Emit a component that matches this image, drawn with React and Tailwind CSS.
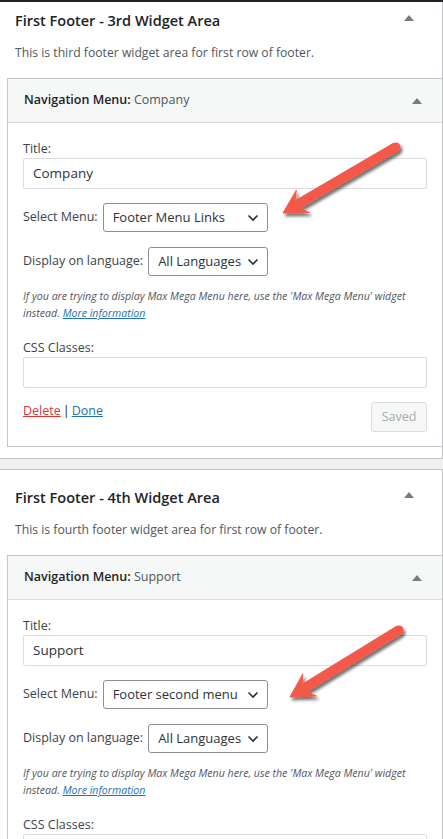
import React from "react";

const font = { fontFamily: '"Open Sans", "Noto Sans", sans-serif' };

const Caret = ({ className = "" }) => (
  <svg width="10" height="6" viewBox="0 0 10 6" className={className}>
    <path d="M5 0 L10 6 L0 6 Z" fill="#787c82" />
  </svg>
);

const Chevron = () => (
  <svg width="12" height="8" viewBox="0 0 12 8" className="shrink-0">
    <path d="M1.5 1.5 L6 6 L10.5 1.5" fill="none" stroke="#2c3338" strokeWidth="1.6" />
  </svg>
);

const Select = ({ value, width }) => (
  <div
    className={`flex h-[29px] items-center justify-between gap-[4px] overflow-hidden rounded-[3px] border border-[#8c8f94] bg-white pl-[9px] pr-[8px] text-[13px] text-[#2c3338] ${width}`}
  >
    <span className="overflow-hidden whitespace-nowrap">{value}</span>
    <Chevron />
  </div>
);

// snagit style arrow, drawn from tail to tip
const Arrow = ({ tail, tip }) => {
  const dx = tail[0] - tip[0];
  const dy = tail[1] - tip[1];
  const len = Math.hypot(dx, dy);
  const u = [dx / len, dy / len];
  const n = [-u[1], u[0]];
  const p = (a, b) => [tip[0] + u[0] * a + n[0] * b, tip[1] + u[1] * a + n[1] * b];
  const pts = [
    p(0, 0),
    p(23, 13),
    p(17, 4.5),
    p(len, 4.5),
    p(len, -4.5),
    p(17, -4.5),
    p(23, -13),
  ];
  return (
    <g filter="url(#arrowShadow)">
      <polygon
        points={pts.map((q) => q.join(",")).join(" ")}
        fill="#f4594a"
        stroke="#f4594a"
        strokeWidth="1"
        strokeLinejoin="round"
      />
      <circle cx={tail[0]} cy={tail[1]} r="4.5" fill="#f4594a" />
    </g>
  );
};

const WidgetArea = ({ title, desc, widget, menu, first }) => (
  <div className={`border-r border-[#c3c4c7] bg-white ${first ? "" : "pt-[9px]"}`}>
    <div className="flex h-[38px] items-center justify-between pl-[15px] pr-[28px]">
      <h2 className="text-[14.5px] font-semibold text-[#1d2327]">{title}</h2>
      <Caret className="-mt-[6px]" />
    </div>
    <p className="flex h-[26px] items-center pl-[15px] text-[12.2px] text-[#50575e]">{desc}</p>
    <div className="ml-[7px] mt-[12px] -mr-px border border-[#c3c4c7]">
      <div className="flex h-[44px] items-center justify-between border-b border-[#dcdcde] bg-[#f6f7f7] pl-[16px] pr-[20px] text-[12.5px]">
        <span>
          <span className="font-semibold text-[#1d2327]">Navigation Menu:</span>{" "}
          <span className="text-[#50575e]">{widget}</span>
        </span>
        <Caret />
      </div>
      <div className="px-[15px] pb-[14px] pt-[17px] text-[12.5px] text-[#3c434a]">
        <label className="block leading-[18px]">Title:</label>
        <div className="flex h-[31px] items-center rounded-[2px] border border-[#dcdcde] px-[9px] text-[13.5px] text-[#2c3338]">
          {widget}
        </div>
        <div className="mt-[14px] flex items-center gap-[5px]">
          <span>Select Menu:</span>
          <Select value={menu} width="w-[165px]" />
        </div>
        <div className="mt-[15px] flex items-center gap-[5px]">
          <span>Display on language:</span>
          <Select value="All Languages" width="w-[120px]" />
        </div>
        <p className="mt-[12px] text-[10.6px] italic leading-[17px] text-[#50575e]">
          If you are trying to display Max Mega Menu here, use the 'Max Mega Menu' widget instead.{" "}
          <a className="text-[#2271b1] underline">More information</a>
        </p>
        <label className="mt-[16px] block leading-[19px]">CSS Classes:</label>
        <div className="h-[31px] rounded-[2px] border border-[#dcdcde]" />
        <div className="mt-[14px] flex items-start justify-between">
          <div className="leading-[18px]">
            <a className="text-[#d63638] underline">Delete</a>
            <span className="px-[2px] text-[#1d2327]">|</span>
            <a className="text-[#2271b1] underline">Done</a>
          </div>
          <button className="h-[30px] w-[56px] rounded-[3px] border border-[#dcdcde] bg-[#f6f7f7] text-[12.5px] text-[#a7aaad]">
            Saved
          </button>
        </div>
      </div>
    </div>
    {first && <div className="h-[11px]" />}
  </div>
);

export default function App() {
  return (
    <div className="relative h-[839px] w-[443px] overflow-hidden border-t-2 border-[#1d2327] bg-white" style={font}>
      <WidgetArea
        first
        title="First Footer - 3rd Widget Area"
        desc="This is third footer widget area for first row of footer."
        widget="Company"
        menu="Footer Menu Links"
      />
      <div className="h-[12px] border-y border-[#c3c4c7] bg-[#f0f0f1]" />
      <WidgetArea
        title="First Footer - 4th Widget Area"
        desc="This is fourth footer widget area for first row of footer."
        widget="Support"
        menu="Footer second menu"
      />
      <svg className="pointer-events-none absolute left-0 top-[-2px]" width="443" height="839">
        <defs>
          <filter id="arrowShadow" x="-20%" y="-20%" width="140%" height="140%">
            <feDropShadow dx="2" dy="3" stdDeviation="1.5" floodColor="#000" floodOpacity="0.55" />
          </filter>
        </defs>
        <Arrow tail={[396, 147]} tip={[283, 213]} />
        <Arrow tail={[399, 630]} tip={[290, 697]} />
      </svg>
    </div>
  );
}
